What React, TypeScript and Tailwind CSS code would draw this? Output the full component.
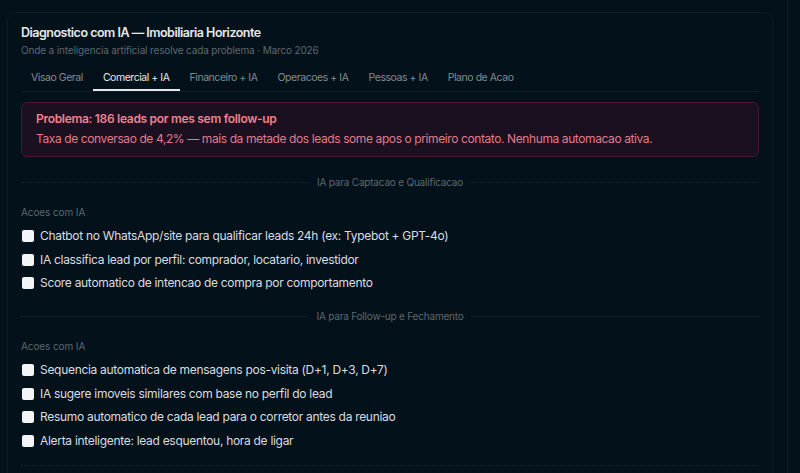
import React from "react";

const tabs = ["Visao Geral", "Comercial + IA", "Financeiro + IA", "Operacoes + IA", "Pessoas + IA", "Plano de Acao"];

const groups = [
  {
    title: "IA para Captacao e Qualificacao",
    items: [
      "Chatbot no WhatsApp/site para qualificar leads 24h (ex: Typebot + GPT-4o)",
      "IA classifica lead por perfil: comprador, locatario, investidor",
      "Score automatico de intencao de compra por comportamento",
    ],
  },
  {
    title: "IA para Follow-up e Fechamento",
    items: [
      "Sequencia automatica de mensagens pos-visita (D+1, D+3, D+7)",
      "IA sugere imoveis similares com base no perfil do lead",
      "Resumo automatico de cada lead para o corretor antes da reuniao",
      "Alerta inteligente: lead esquentou, hora de ligar",
    ],
  },
];

const Divider: React.FC<{ label: string }> = ({ label }) => (
  <div className="flex items-center gap-[7px]">
    <div className="flex-1 border-t border-dotted border-[#1c2a33]" />
    <span className="text-[10px] leading-[14px] tracking-[-0.2px] text-[#5d6870]">{label}</span>
    <div className="flex-1 border-t border-dotted border-[#1c2a33]" />
  </div>
);

export default function App() {
  return (
    <div
      className="relative h-[473px] overflow-hidden bg-[#03111a]"
      style={{ fontFamily: "Inter, 'Noto Sans', sans-serif" }}
    >
      {/* right scroll strip */}
      <div className="absolute top-0 bottom-0 left-[787px] w-px bg-[#0c1a22]" />

      <div className="ml-[7px] mt-[12px] w-[766px] rounded-[8px] border border-[#0c1b24] bg-[#02111a] px-[13px] pt-[13px] pb-[14px]">
        <h1 className="text-[12.5px] font-semibold leading-[14px] tracking-[-0.5px] text-[#e6e9eb]">
          Diagnostico com IA — Imobiliaria Horizonte
        </h1>
        <p className="mt-[3px] text-[10px] leading-[14px] tracking-[-0.15px] text-[#5d6870]">
          Onde a inteligencia artificial resolve cada problema · Marco 2026
        </p>

        <div className="mt-[8px] flex border-b border-[#0f1e27]">
          {tabs.map((t, i) => (
            <div
              key={t}
              className={
                "px-[10px] pt-[6px] pb-[4px] text-[10.5px] leading-[14px] tracking-[-0.45px] border-b-2 " +
                (i === 1 ? "border-[#e5e7eb] text-[#e6e9eb]" : "border-transparent text-[#818b92]")
              }
            >
              {t}
            </div>
          ))}
        </div>

        <div className="mt-[10px] rounded-[6px] border border-[#4a1730] bg-[#1a1020] px-[14px] pt-[8px] pb-[9px]">
          <div className="text-[12px] font-semibold leading-[16px] tracking-[-0.3px] text-[#f2808f]">
            Problema: 186 leads por mes sem follow-up
          </div>
          <div className="mt-[4px] text-[12px] leading-[16px] tracking-[-0.4px] text-[#e27a8c]">
            Taxa de conversao de 4,2% — mais da metade dos leads some apos o primeiro contato. Nenhuma automacao ativa.
          </div>
        </div>

        {groups.map((g) => (
          <div key={g.title} className="mt-[18px]">
            <Divider label={g.title} />
            <div className="mt-[16px] text-[10px] leading-[14px] tracking-[-0.1px] text-[#5d6870]">Acoes com IA</div>
            <div className="mt-[9px] flex flex-col gap-[7.5px]">
              {g.items.map((it) => (
                <label key={it} className="flex items-center gap-[6px] pl-px">
                  <span className="h-[12px] w-[12px] shrink-0 rounded-[2px] bg-[#f3f4f6]" />
                  <span className="text-[12px] leading-[16px] tracking-[-0.3px] text-[#dadde0]">{it}</span>
                </label>
              ))}
            </div>
          </div>
        ))}
        <div className="mt-[16px] border-t border-dotted border-[#1c2a33]" />
      </div>
    </div>
  );
}
